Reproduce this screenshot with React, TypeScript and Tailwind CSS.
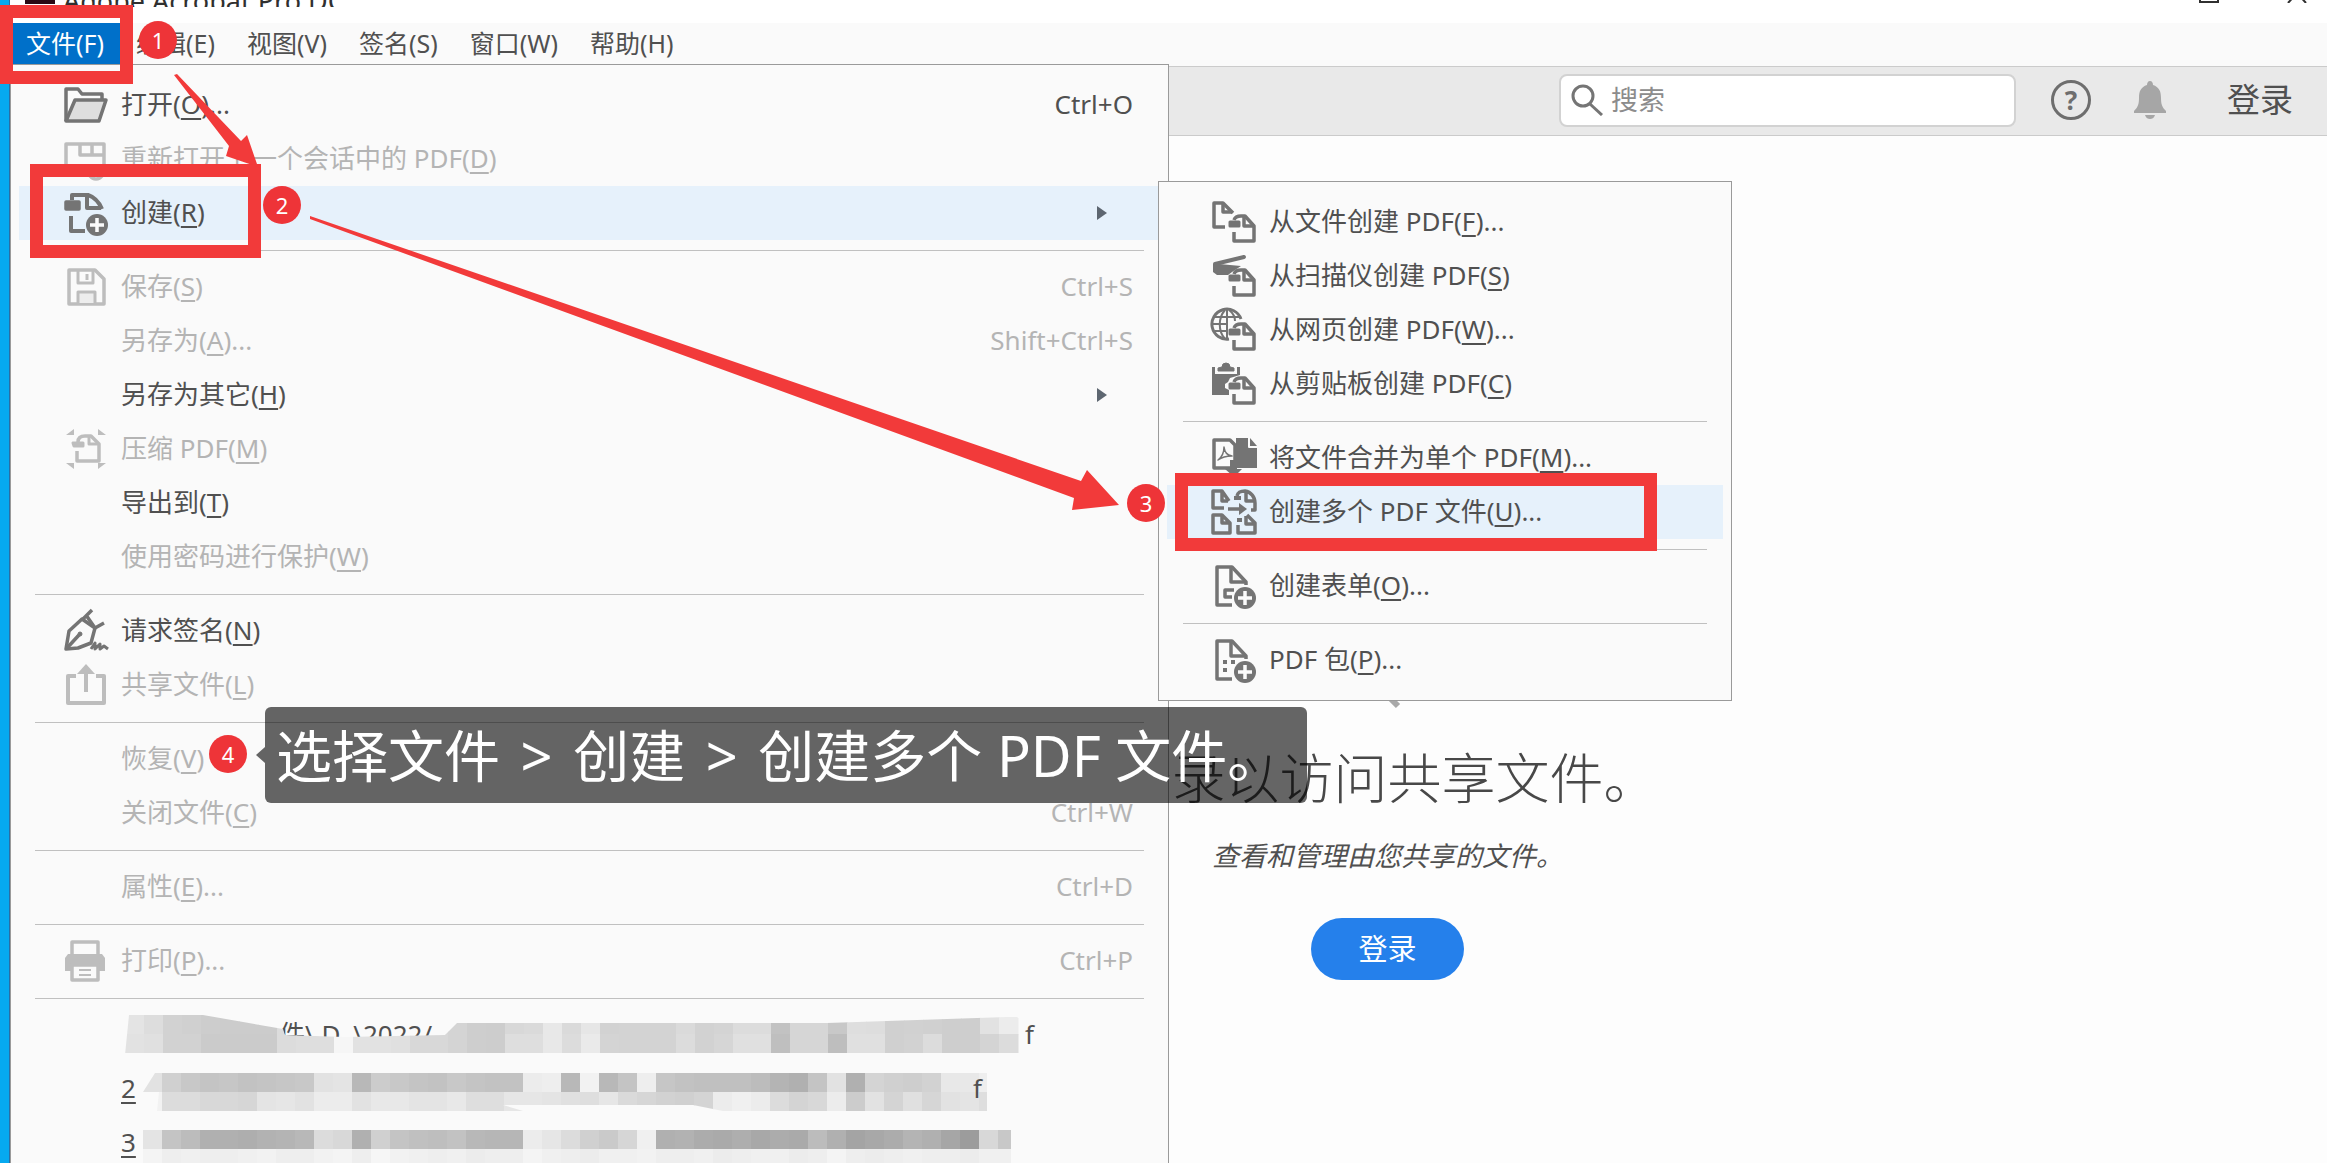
import React from 'react';
import clsx from 'clsx';

interface MenuEntry {
  label?: string;
  hotkey?: string;
  tail?: string;
  shortcut?: string;
  icon?: React.ReactNode;
  disabled?: boolean;
  active?: boolean;
  submenu?: boolean;
  separator?: boolean;
}

const Icon = ({ children }: { children?: React.ReactNode }) => (
  <svg
    viewBox="0 0 48 48"
    className="h-12 w-12 shrink-0"
    fill="none"
    stroke="currentColor"
    strokeWidth="3.5"
    strokeLinejoin="round"
    aria-hidden="true"
  >
    {children}
  </svg>
);

/* Small tagged page that sits in the lower right of the "create from" icons */
const PdfPage = () => (
  <g>
    <path d="M24 22c1-3 3-4 7-4h4l9 10v15H24v-9" />
    <path d="M34 19v9h9" />
    <path d="M20 24h9v4h-9z" fill="currentColor" strokeWidth="3" />
  </g>
);

const PlusBadge = () => (
  <g>
    <circle cx="35" cy="36" r="11" fill="currentColor" stroke="none" />
    <path d="M35 29v14M28 36h14" stroke="#fafafa" />
  </g>
);

/* ICONS: MAIN MENU */
const OpenIcon = () => (
  <Icon>
    <path d="M4 40V8h12l4 5h20v6" />
    <path d="M4 40l9-21h31l-7 21z" fill="#dedede" />
  </Icon>
);

const ReopenIcon = () => (
  <Icon>
    <path d="M4 40V9h38v22" />
    <path d="M18 10v10h23M30 10v9" />
    <path d="M28 41c3 4 9 4 12 0" />
  </Icon>
);

const CreateIcon = () => (
  <Icon>
    <path d="M10 11V6h16c6 2 11 7 14 14" strokeWidth="4" />
    <path d="M25 6v13h14" strokeWidth="4" />
    <path d="M4 13h13v7H4z" fill="currentColor" />
    <path d="M9 27v15h14" strokeWidth="4" />
    <PlusBadge />
  </Icon>
);

const SaveIcon = () => (
  <Icon>
    <path d="M7 7h26l9 9v25H7z" />
    <path d="M16 8v12h15V8M25 11v6" strokeWidth="3" />
    <path d="M16 40V29h17v11" fill="#ededed" strokeWidth="3" />
  </Icon>
);

const CompressIcon = () => (
  <Icon>
    <path d="M16 17c0-4 2-6 7-6h6l8 8v17H15V26" />
    <path d="M27 12v7h9" strokeWidth="3" />
    <path d="M11 18h10v3h-9z" fill="currentColor" strokeWidth="3" />
    <path
      d="M4 10l8-6v6zM44 10l-8-6v6zM4 38l8 6v-6zM44 38l-8 6v-6z"
      fill="currentColor"
      stroke="none"
    />
  </Icon>
);

const SignIcon = () => (
  <Icon>
    <path d="M4 42l3-18 13-12 13 9-4 15-13 5z" />
    <path d="M20 13L30 3M24 8l9 13 9-5M5 41l12-13" />
    <circle cx="18" cy="27" r="2" fill="currentColor" strokeWidth="1" />
    <path d="M29 42l4-6v6l5-5v5l4-3 4 3" strokeWidth="3" />
  </Icon>
);

const ShareIcon = () => (
  <Icon>
    <path d="M14 15H6v27h36V15h-8" strokeWidth="4" />
    <path d="M24 31V10" strokeWidth="4" />
    <path d="M15 13l9-10 9 10z" fill="currentColor" stroke="none" />
  </Icon>
);

const PrintIcon = () => (
  <Icon>
    <path d="M10 20V5h26v15" />
    <path d="M6 17h34l3 4v13H3V21z" fill="currentColor" stroke="none" />
    <path d="M10 28h26v15H10z" fill="#fafafa" />
    <path d="M17 33h12M17 38h12" strokeWidth="2" />
  </Icon>
);

/* ICONS: CREATE SUBMENU */
const FromFileIcon = () => (
  <Icon>
    <path d="M15 29H4V5h9l10 10" />
    <path d="M13 6v8h9" />
    <PdfPage />
  </Icon>
);

const FromScannerIcon = () => (
  <Icon>
    <path d="M5 12l29-7" strokeWidth="4" strokeLinecap="round" />
    <path d="M3 12h6l22 2-9 6-4 3H7l-4-3z" fill="currentColor" stroke="none" />
    <PdfPage />
  </Icon>
);

const FromWebIcon = () => (
  <Icon>
    <g strokeWidth="2">
      <path d="M19 33A15 15 0 1 1 31 13" strokeWidth="3" />
      <path d="M17 4v28M3 18h14M5 11h25M5 25h12" />
      <path d="M15 4C8 12 8 25 15 33M19 4c4 3 6 7 6 11" />
    </g>
    <PdfPage />
  </Icon>
);

const FromClipboardIcon = () => (
  <Icon>
    <path d="M2 7h3v7h22V7h3v8l-10 3-2 4-3 2v4l4 2v5H2z" fill="currentColor" stroke="none" />
    <path d="M8 11V8l4-1a4 4 0 0 1 8 0l4 1v3z" fill="currentColor" strokeWidth="1" />
    <PdfPage />
  </Icon>
);

const MergeIcon = () => (
  <Icon>
    <path d="M26 4h14l7 8v22H26z" fill="currentColor" stroke="none" />
    <path d="M39 4v9h8" stroke="#fafafa" strokeWidth="2" />
    <path d="M4 6h16l5 5v23H4z" fill="#fafafa" />
    <path d="M8 26c4-3 6-7 6-13 1 6 3 8 8 9-5 0-10 1-14 4z" strokeWidth="1.5" />
    <path d="M20 26h7v9h5l-8 8-9-8h5z" fill="currentColor" stroke="none" />
  </Icon>
);

const MultipleIcon = () => (
  <Icon>
    <path d="M14 20H3V3h9l7 10M12 4v9h6" />
    <path d="M27 8c1-4 3-5 8-5 6 1 10 6 10 12v7h-4M36 4v9h8" />
    <path d="M3 27h9l8 8v10H3zM12 28v7h7" />
    <path d="M28 37v8h17V35l-8-8M36 28v8h8" />
    <path d="M18 21h15" />
    <path d="M29 15l8 6-8 6z" fill="currentColor" stroke="none" />
    <path d="M24 10h7M27 32h5" strokeWidth="4" />
  </Icon>
);

const FormIcon = () => (
  <Icon>
    <path d="M22 43H7V5h15l14 15v3" />
    <path d="M21 6v14h14" />
    <path d="M24 28h-9v7h7" />
    <PlusBadge />
  </Icon>
);

const PortfolioIcon = () => (
  <Icon>
    <path d="M22 43H7V5h15l14 15v3" />
    <path d="M21 6v14h14" />
    <path d="M13 26h4M21 26h4M13 34h4" strokeWidth="4" />
    <PlusBadge />
  </Icon>
);

const MENU_BAR = ['文件(F)', '编辑(E)', '视图(V)', '签名(S)', '窗口(W)', '帮助(H)'];

const FILE_MENU: MenuEntry[] = [
  { label: '打开', hotkey: 'O', tail: '...', shortcut: 'Ctrl+O', icon: <OpenIcon /> },
  { label: '重新打开上一个会话中的 PDF', hotkey: 'D', icon: <ReopenIcon />, disabled: true },
  { label: '创建', hotkey: 'R', icon: <CreateIcon />, active: true, submenu: true },
  { separator: true },
  { label: '保存', hotkey: 'S', shortcut: 'Ctrl+S', icon: <SaveIcon />, disabled: true },
  { label: '另存为', hotkey: 'A', tail: '...', shortcut: 'Shift+Ctrl+S', disabled: true },
  { label: '另存为其它', hotkey: 'H', submenu: true },
  { label: '压缩 PDF', hotkey: 'M', icon: <CompressIcon />, disabled: true },
  { label: '导出到', hotkey: 'T' },
  { label: '使用密码进行保护', hotkey: 'W', disabled: true },
  { separator: true },
  { label: '请求签名', hotkey: 'N', icon: <SignIcon /> },
  { label: '共享文件', hotkey: 'L', icon: <ShareIcon />, disabled: true },
  { separator: true },
  { label: '恢复', hotkey: 'V', disabled: true },
  { label: '关闭文件', hotkey: 'C', shortcut: 'Ctrl+W', disabled: true },
  { separator: true },
  { label: '属性', hotkey: 'E', tail: '...', shortcut: 'Ctrl+D', disabled: true },
  { separator: true },
  { label: '打印', hotkey: 'P', tail: '...', shortcut: 'Ctrl+P', icon: <PrintIcon />, disabled: true },
  { separator: true },
];

const CREATE_MENU: MenuEntry[] = [
  { label: '从文件创建 PDF', hotkey: 'F', tail: '...', icon: <FromFileIcon /> },
  { label: '从扫描仪创建 PDF', hotkey: 'S', icon: <FromScannerIcon /> },
  { label: '从网页创建 PDF', hotkey: 'W', tail: '...', icon: <FromWebIcon /> },
  { label: '从剪贴板创建 PDF', hotkey: 'C', icon: <FromClipboardIcon /> },
  { separator: true },
  { label: '将文件合并为单个 PDF', hotkey: 'M', tail: '...', icon: <MergeIcon /> },
  { label: '创建多个 PDF 文件', hotkey: 'U', tail: '...', icon: <MultipleIcon />, active: true },
  { separator: true },
  { label: '创建表单', hotkey: 'O', tail: '...', icon: <FormIcon /> },
  { separator: true },
  { label: 'PDF 包', hotkey: 'P', tail: '...', icon: <PortfolioIcon /> },
];

/* Grey levels of the pixelated recent file names, one hex pair per block */
const MOSAIC = [
  {
    place: 'top-[7px] left-[106px]',
    outline: 'M4 0h74l80 14 2 6 60 2 100-2 12-12h370l180-6h10l15 10v28H0z',
    top: 'e4 dd d2 d0 cd cc cc cc dc df df ec e6 e2 e0 d8 d6 d4 ce cd d8 da e8 da e6 d2 d3 d3 d3 da d2 d4 dc dc c2 d6 d6 c8 de dd d0 d1 d0 ce ce e2 ec',
    bottom: 'e2 e0 d2 d2 cb cb cb cb dc de de f6 e2 e2 e0 d8 d8 d4 ce cd de de e8 dc ea d4 d3 d3 d3 dc d2 d6 e0 e0 bf d6 d6 be e0 e0 d0 d2 dc ce ce d4 dc',
  },
  {
    place: 'top-[11px] left-[124px]',
    outline: 'M12 0h832v38H580l-30-6H360l20 6H14L16 19H0z',
    top: 'e2 d0 c8 c4 c6 c2 c4 c6 c8 e2 e4 b8 cc c8 c4 c2 c8 c4 c2 c2 ec ee b8 f2 b8 c4 ee c6 c2 c0 c0 c0 bc b4 b0 c4 e2 b0 d4 d0 ce d2 e8 e8 ee',
    bottom: 'f2 dc dc d8 d8 d6 e4 e6 e2 ec ec e2 e8 e8 e4 e4 e8 de de e6 e6 e4 e0 de e6 da d6 d2 d0 d4 ec f0 ec dc d4 d8 ec cc e2 d4 e0 d6 e2 e4 de',
  },
  {
    place: 'top-[14px] left-[124px]',
    outline: 'M0 0h868v38H0z',
    top: 'e4 c4 bc b0 b0 ae b2 b4 b8 dc d8 b0 d0 c4 c0 be c2 b8 b6 b6 ec e6 dc d0 ca d6 f0 b0 b2 ac aa ae a8 ac aa bc b0 a4 a8 ac b4 b0 a6 9c d8 c8 cc',
    bottom: 'f4 ee f0 ee ee f0 f2 ee ee f2 f4 ee f6 f2 f0 ee f0 ec ee ee f4 f0 ee ec f0 f0 f2 ee ee f0 ec ee f0 f0 ec ee f4 ee ec ee f0 ee ee ec f0 f0 f2',
  },
];

const Mosaic = ({ row }: { row: number }) => {
  const { place, outline, top, bottom } = MOSAIC[row];
  return (
    <svg viewBox="0 0 903 38" className={clsx('absolute h-[38px] w-[903px]', place)} aria-hidden="true">
      <defs>
        <clipPath id={`smudge-${row}`}>
          <path d={outline} />
        </clipPath>
      </defs>
      <g clipPath={`url(#smudge-${row})`}>
        {[top.split(' '), bottom.split(' ')].map((band, y) =>
          band.map((grey, x) => (
            <rect key={`${x}-${y}`} x={x * 19} y={y * 19} width="19.5" height="19.5" fill={`#${grey}${grey}${grey}`} />
          ))
        )}
      </g>
    </svg>
  );
};

const MenuItem = ({ item }: { item: MenuEntry }) => {
  if (item.separator) {
    return (
      <div role="separator" className="mx-6 flex h-5 items-center">
        <div className="h-px flex-1 bg-[#c0c0c0]" />
      </div>
    );
  }
  return (
    <button
      type="button"
      role="menuitem"
      disabled={item.disabled}
      className={clsx(
        'mx-2 flex h-[54px] items-center gap-[11px] pr-[27px] pl-[43px] text-left text-[26px] leading-[36px]',
        item.disabled ? 'text-[#b4b4b4]' : 'text-[#505050]',
        item.active && 'bg-[#e6f1fb]'
      )}
    >
      <span className={clsx('flex w-12 shrink-0', item.disabled ? 'text-[#bdbdbd]' : 'text-[#747474]')}>{item.icon}</span>
      <span className="flex-1 pb-0.5 whitespace-nowrap">
        {item.label}(<span className="underline underline-offset-4">{item.hotkey}</span>){item.tail}
      </span>
      {item.shortcut && <span className="pb-0.5">{item.shortcut}</span>}
      {item.submenu && (
        <svg viewBox="0 0 10 14" className="mr-[26px] h-[14px] w-[10px]" fill="#5d6670" aria-hidden="true">
          <path d="M0 0l10 7-10 7z" />
        </svg>
      )}
    </button>
  );
};

const RecentFile = ({ row, index, text, end }: { row: number; index?: number; text?: string; end?: string }) => (
  <button
    type="button"
    role="menuitem"
    className="relative mx-2 h-[54px] text-left text-[26px] leading-[52px] text-[#505050]"
  >
    {index && <span className="absolute top-0 left-[102px] underline underline-offset-4">{index}</span>}
    {text && <span className="absolute top-0 left-[260px]">{text}</span>}
    <Mosaic row={row} />
    {end && <span className={clsx('absolute top-0', row === 0 ? 'left-[1006px]' : 'left-[954px]')}>{end}</span>}
  </button>
);

const Step = ({ n, className }: { n: number; className: string }) => (
  <span
    className={clsx(
      'absolute flex h-[38px] w-[38px] items-center justify-center rounded-full bg-[#ee3438] text-[22px] leading-none text-white',
      className
    )}
  >
    {n}
  </span>
);

export default function App() {
  return (
    <div className="relative flex h-screen overflow-hidden bg-[#fdfdfd] font-['Noto_Sans','Noto_Sans_CJK_SC',sans-serif] text-[#505050]">
      {/* DESKTOP EDGE */}
      <div className="w-[10px] shrink-0 border-r border-[#2a6ea5] bg-[#06a9f0]" />

      <div className="relative flex min-w-0 flex-1 flex-col">
        {/* TITLE BAR */}
        <header className="flex h-[23px] shrink-0 items-start justify-between bg-white pr-5 pl-[15px]">
          <div className="flex h-[7px] items-end gap-2 overflow-hidden">
            <span className="mb-[3px] h-10 w-[30px] bg-[#2b0a14]" />
            <h1 className="text-[27px] leading-[12px] text-[#303030]">Adobe Acrobat Pro DC</h1>
          </div>
          <div className="flex h-[3px] items-end gap-[68px] overflow-hidden">
            <button type="button" aria-label="最大化" className="h-5 w-5 border-2 border-[#303030]" />
            <button type="button" aria-label="关闭" className="h-5 w-5">
              <svg viewBox="0 0 20 20" className="h-5 w-5" stroke="#303030" strokeWidth="2" aria-hidden="true">
                <path d="M1 0l18 20M19 0L1 20" />
              </svg>
            </button>
          </div>
        </header>

        {/* MENU BAR */}
        <nav className="flex h-[43px] shrink-0 bg-[#fafafa] pb-0.5 text-[25px] leading-[41px]">
          {MENU_BAR.map((name, i) => (
            <button key={name} type="button" className={clsx('px-4', i === 0 && 'bg-[#0070c9] text-white')}>
              {name}
            </button>
          ))}
        </nav>

        {/* TOOLBAR */}
        <div className="flex h-[70px] shrink-0 items-center justify-end border-y border-[#cbcbcb] bg-[#e9e9e9] pr-[34px] pb-0.5">
          <label className="flex h-[53px] w-[457px] items-center gap-2 rounded-lg border-2 border-[#d2d2d2] bg-white pl-[10px]">
            <svg viewBox="0 0 32 32" className="h-8 w-8" fill="none" stroke="#757575" strokeWidth="3" aria-label="搜索">
              <circle cx="12" cy="12" r="10" />
              <path d="M19 20l12 11" />
            </svg>
            <input
              type="search"
              placeholder="搜索"
              className="min-w-0 flex-1 bg-transparent text-[27px] leading-[40px] outline-none placeholder:text-[#8c8c8c]"
            />
          </label>
          <button
            type="button"
            aria-label="帮助"
            className="ml-[35px] flex h-10 w-10 items-center justify-center rounded-full border-3 border-[#6e6e6e] text-[26px] leading-none font-bold text-[#6e6e6e]"
          >
            ?
          </button>
          <button type="button" aria-label="通知" className="ml-[42px]">
            <svg viewBox="0 0 34 40" className="h-10 w-[34px]" fill="#a6a6a6" aria-hidden="true">
              <path d="M17 1c2 0 3 2 3 4 6 2 8 6 8 13 0 6 1 9 5 13v2H1v-2c4-4 5-7 5-13C6 11 8 7 14 5c0-2 1-4 3-4z" />
              <path d="M12 35h10c-1 3-3 4-5 4s-4-1-5-4z" />
            </svg>
          </button>
          <button type="button" className="ml-[60px] text-[33px] leading-[48px]">
            登录
          </button>
        </div>

        {/* SHARED FILES */}
        <main className="flex flex-1 flex-col items-center pt-[434px] pl-[438px]">
          <svg viewBox="0 0 200 140" className="h-[140px] w-[200px] shrink-0" fill="none" stroke="#a8a8a8" strokeWidth="6" aria-hidden="true">
            <circle cx="60" cy="86" r="36" />
            <path d="M86 112l24 24" />
          </svg>
          <h2 className="mt-[30px] text-[54px] leading-[76px] font-light text-[#484848]">登录以访问共享文件。</h2>
          <p className="mt-5 text-[27px] leading-[40px] text-[#505050] italic">查看和管理由您共享的文件。</p>
          <button type="button" className="mt-[42px] h-[62px] w-[153px] shrink-0 rounded-full bg-[#2580eb] text-[29px] leading-[40px] text-white">
            登录
          </button>
        </main>

        {/* FILE MENU */}
        <div
          role="menu"
          aria-label="文件"
          className="absolute top-16 left-0 flex w-[1159px] flex-col border border-[#9a9a9a] bg-[#fafafa] pt-[13px]"
        >
          {FILE_MENU.map((item, i) => (
            <MenuItem key={i} item={item} />
          ))}
          <RecentFile row={0} text="件\ D..\2022/" end="f" />
          <RecentFile row={1} index={2} end="f" />
          <RecentFile row={2} index={3} />
        </div>

        {/* CREATE SUBMENU */}
        <div
          role="menu"
          aria-label="创建"
          className="absolute top-[181px] left-[1148px] flex w-[574px] flex-col border border-[#9a9a9a] bg-[#fafafa] py-[13px]"
        >
          {CREATE_MENU.map((item, i) => (
            <MenuItem key={i} item={item} />
          ))}
        </div>
      </div>

      {/* STEP ANNOTATIONS */}
      <div className="absolute top-[5px] left-0 h-[79px] w-[133px] border-[13px] border-[#f23a3a]" />
      <div className="absolute top-[164px] left-[30px] h-[94px] w-[231px] border-[13px] border-[#f23a3a]" />
      <div className="absolute top-[473px] left-[1175px] h-[78px] w-[482px] border-[13px] border-[#f23a3a]" />
      <svg viewBox="0 0 1200 600" className="pointer-events-none absolute top-0 left-0 h-[600px] w-[1200px]" fill="#f23a3a" aria-hidden="true">
        <path d="M174 75L229 146L226 156L258 167L247 135L241 141L177 74z" />
        <path d="M310 216L1081 481L1087 470L1119 505L1072 510L1074 498L310 219z" />
      </svg>
      <Step n={1} className="top-[21px] left-[139px]" />
      <Step n={2} className="top-[186px] left-[263px]" />
      <Step n={3} className="top-[484px] left-[1127px]" />
      <Step n={4} className="top-[735px] left-[209px]" />
      <div className="absolute top-[707px] left-[256px] flex items-center">
        <div className="h-0 w-0 border-y-[8px] border-r-[9px] border-y-transparent border-r-black/60" />
        <p className="rounded-md bg-black/60 py-[10px] pr-6 pl-[11px] text-[56px] leading-[76px] whitespace-nowrap text-white">
          选择文件 <span className="mx-1.5">&gt;</span> 创建 <span className="mx-1.5">&gt;</span> 创建多个 PDF 文件。
        </p>
      </div>
    </div>
  );
}
